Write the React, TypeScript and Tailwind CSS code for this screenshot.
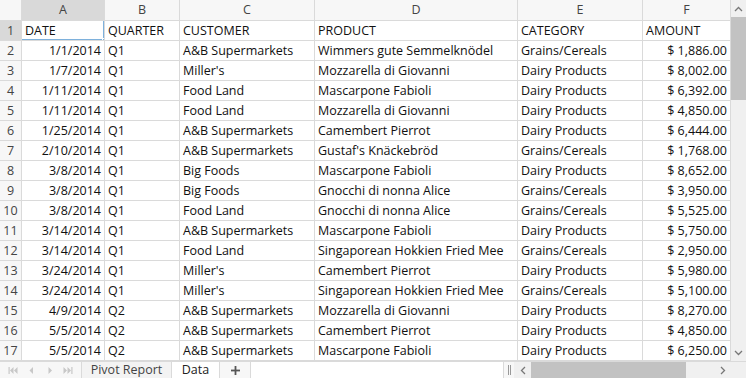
import React from "react";

const rows: string[][] = [
  ["1/1/2014", "Q1", "A&B Supermarkets", "Wimmers gute Semmelknödel", "Grains/Cereals", "$ 1,886.00"],
  ["1/7/2014", "Q1", "Miller's", "Mozzarella di Giovanni", "Dairy Products", "$ 8,002.00"],
  ["1/11/2014", "Q1", "Food Land", "Mascarpone Fabioli", "Dairy Products", "$ 6,392.00"],
  ["1/11/2014", "Q1", "Food Land", "Mozzarella di Giovanni", "Dairy Products", "$ 4,850.00"],
  ["1/25/2014", "Q1", "A&B Supermarkets", "Camembert Pierrot", "Dairy Products", "$ 6,444.00"],
  ["2/10/2014", "Q1", "A&B Supermarkets", "Gustaf's Knäckebröd", "Grains/Cereals", "$ 1,768.00"],
  ["3/8/2014", "Q1", "Big Foods", "Mascarpone Fabioli", "Dairy Products", "$ 8,652.00"],
  ["3/8/2014", "Q1", "Big Foods", "Gnocchi di nonna Alice", "Grains/Cereals", "$ 3,950.00"],
  ["3/8/2014", "Q1", "Food Land", "Gnocchi di nonna Alice", "Grains/Cereals", "$ 5,525.00"],
  ["3/14/2014", "Q1", "A&B Supermarkets", "Mascarpone Fabioli", "Dairy Products", "$ 5,750.00"],
  ["3/14/2014", "Q1", "Food Land", "Singaporean Hokkien Fried Mee", "Grains/Cereals", "$ 2,950.00"],
  ["3/24/2014", "Q1", "Miller's", "Camembert Pierrot", "Dairy Products", "$ 5,980.00"],
  ["3/24/2014", "Q1", "Miller's", "Singaporean Hokkien Fried Mee", "Grains/Cereals", "$ 5,100.00"],
  ["4/9/2014", "Q2", "A&B Supermarkets", "Mozzarella di Giovanni", "Dairy Products", "$ 8,270.00"],
  ["5/5/2014", "Q2", "A&B Supermarkets", "Camembert Pierrot", "Dairy Products", "$ 4,850.00"],
  ["5/5/2014", "Q2", "A&B Supermarkets", "Mascarpone Fabioli", "Dairy Products", "$ 6,250.00"],
];

const letters = ["A", "B", "C", "D", "E", "F"];
const headers = ["DATE", "QUARTER", "CUSTOMER", "PRODUCT", "CATEGORY", "AMOUNT"];

function NavIcon({ kind }: { kind: "first" | "prev" | "next" | "last" }) {
  const c = "#c8c8c8";
  return (
    <svg width="10" height="9" viewBox="0 0 10 9">
      {kind === "first" && (
        <g fill={c}>
          <rect x="0.5" y="1" width="1.2" height="7" />
          <polygon points="5.5,1 5.5,8 2,4.5" />
          <polygon points="9.5,1 9.5,8 6,4.5" />
        </g>
      )}
      {kind === "prev" && <polygon fill={c} points="7,1 7,8 3.5,4.5" />}
      {kind === "next" && <polygon fill={c} points="3.5,1 3.5,8 7,4.5" />}
      {kind === "last" && (
        <g fill={c}>
          <polygon points="0.5,1 0.5,8 4,4.5" />
          <polygon points="4.5,1 4.5,8 8,4.5" />
          <rect x="8.3" y="1" width="1.2" height="7" />
        </g>
      )}
    </svg>
  );
}

export default function App() {
  const cell =
    "border-r border-b border-[#dadada] px-[3px] pt-[2px] whitespace-nowrap overflow-hidden flex items-center";
  const hdr = "border-r border-b border-[#dadada] flex items-center justify-center text-[#444] pt-[1px]";
  return (
    <div
      className="w-[746px] h-[378px] flex flex-col bg-white text-[12.5px] text-[#111] overflow-hidden"
      style={{ fontFamily: '"Open Sans", "Noto Sans", sans-serif' }}
    >
      <div className="flex h-[361px]">
        <div className="relative w-[731px] grid grid-cols-[22px_83px_75px_135px_203px_125px_88px] grid-rows-[21px_repeat(17,20px)]">
          <div className="border-r border-b border-[#dadada] bg-[#f7f7f7]" />
          {letters.map((l, i) => (
            <div key={l} className={`${hdr} ${i === 0 ? "bg-[#d9d9d9]" : "bg-[#f7f7f7]"}`}>
              {l}
            </div>
          ))}
          <div className={`${hdr} bg-[#d9d9d9]`}>1</div>
          {headers.map((h, i) => (
            <div key={h} className={`${cell} ${i === 0 ? "relative" : ""}`}>
              {h}
              {i === 0 && (
                <>
                  <div className="absolute left-0 right-[-1px] bottom-[-1px] h-[2px] bg-[#7eb1dc]" />
                  <div className="absolute top-0 bottom-[-1px] right-[-1px] w-[2px] bg-[#7eb1dc]" />
                  <div className="absolute right-[-4px] bottom-[-4px] w-[6px] h-[6px] bg-[#7eb1dc] border border-white" />
                </>
              )}
            </div>
          ))}
          {rows.map((r, ri) => (
            <React.Fragment key={ri}>
              <div className={`${hdr} bg-[#f7f7f7] pt-[2px]`}>{ri + 2}</div>
              {r.map((v, ci) => (
                <div key={ci} className={`${cell} ${ci === 0 || ci === 5 ? "justify-end" : ""}`}>
                  {v}
                </div>
              ))}
            </React.Fragment>
          ))}
        </div>
        <div className="w-[15px] bg-[#f0f0f0] flex flex-col">
          <div className="h-[17px] flex items-center justify-center">
            <svg width="9" height="6" viewBox="0 0 9 6">
              <polyline points="1,5 4.5,1.5 8,5" fill="none" stroke="#777" strokeWidth="1.3" />
            </svg>
          </div>
          <div className="flex-1 flex flex-col">
            <div className="h-[83px] bg-[#c2c2c2]" />
          </div>
          <div className="h-[17px] flex items-center justify-center">
            <svg width="9" height="6" viewBox="0 0 9 6">
              <polyline points="1,1 4.5,4.5 8,1" fill="none" stroke="#777" strokeWidth="1.3" />
            </svg>
          </div>
        </div>
      </div>
      <div className="flex h-[17px] bg-[#f7f7f7] border-t border-[#dadada] text-[12.5px] text-[#444]">
        <div className="w-[82px] flex items-center justify-around px-[4px] border-r border-[#dadada]">
          <NavIcon kind="first" />
          <NavIcon kind="prev" />
          <NavIcon kind="next" />
          <NavIcon kind="last" />
        </div>
        <div className="w-[90px] flex items-center justify-center border-r border-[#dadada] bg-[#f3f3f3]">
          Pivot Report
        </div>
        <div className="w-[48px] flex items-center justify-center border-r border-[#dadada] bg-white text-[#222]">
          Data
        </div>
        <div className="w-[31px] flex items-center justify-center border-r border-[#dadada]">
          <svg width="9" height="9" viewBox="0 0 9 9">
            <rect x="3.6" y="0" width="1.8" height="9" fill="#555" />
            <rect x="0" y="3.6" width="9" height="1.8" fill="#555" />
          </svg>
        </div>
        <div className="w-[253px] bg-white border-r border-[#dadada]" />
        <div className="w-[10px] flex items-center justify-center">
          <div className="w-[3px] h-[10px] border-l border-r border-[#999]" />
        </div>
        <div className="w-[217px] flex items-center bg-[#f0f0f0]">
          <div className="w-[17px] flex items-center justify-center">
            <svg width="6" height="9" viewBox="0 0 6 9">
              <polyline points="5,1 1.5,4.5 5,8" fill="none" stroke="#777" strokeWidth="1.3" />
            </svg>
          </div>
          <div className="w-[155px] h-[16px] bg-[#c2c2c2]" />
          <div className="flex-1" />
          <div className="w-[17px] flex items-center justify-center">
            <svg width="6" height="9" viewBox="0 0 6 9">
              <polyline points="1,1 4.5,4.5 1,8" fill="none" stroke="#777" strokeWidth="1.3" />
            </svg>
          </div>
        </div>
        <div className="flex-1 bg-[#f0f0f0]" />
      </div>
    </div>
  );
}
